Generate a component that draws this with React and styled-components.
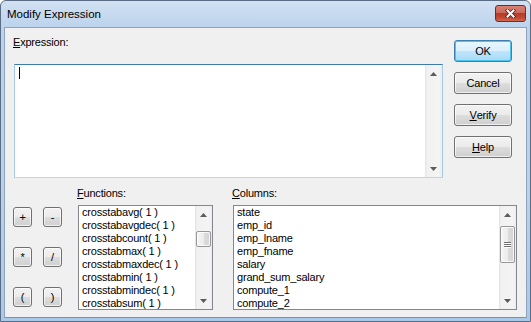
import React from 'react';
import styled, { createGlobalStyle } from 'styled-components';

const Global = createGlobalStyle`
    html, body {
        margin: 0;
        padding: 0;
        background: #fff;
    }
    body {
        width: 531px;
        height: 322px;
        overflow: hidden;
    }
`;

const functions = [
    'crosstabavg( 1 )',
    'crosstabavgdec( 1 )',
    'crosstabcount( 1 )',
    'crosstabmax( 1 )',
    'crosstabmaxdec( 1 )',
    'crosstabmin( 1 )',
    'crosstabmindec( 1 )',
    'crosstabsum( 1 )',
];

const columns = [
    'state',
    'emp_id',
    'emp_lname',
    'emp_fname',
    'salary',
    'grand_sum_salary',
    'compute_1',
    'compute_2',
];

const operators = ['+', '-', '*', '/', '(', ')'];

const Arrow = ({ down }) => (
    <svg width="7" height="4" viewBox="0 0 7 4">
        {down
            ? <polygon points="0,0 7,0 3.5,4" fill="#5b5b5b" />
            : <polygon points="3.5,0 7,4 0,4" fill="#5b5b5b" />}
    </svg>
);

const Scrollbar = ({ thumbTop, thumbHeight, grip }) => (
    <ScrollTrack>
        <ScrollArrow><Arrow /></ScrollArrow>
        <ScrollBody>
            {thumbHeight ? (
                <Thumb style={{ marginTop: thumbTop, height: thumbHeight }}>
                    {grip && <Grip><i /><i /><i /></Grip>}
                </Thumb>
            ) : null}
        </ScrollBody>
        <ScrollArrow><Arrow down /></ScrollArrow>
    </ScrollTrack>
);

const Key = ({ children }) => <u>{children}</u>;

export default function App() {
    return (
        <>
            <Global />
            <Window>
                <TitleBar>
                    <Title>Modify Expression</Title>
                    <CloseButton>
                        <svg width="13" height="9" viewBox="0 0 13 9">
                            <path d="M3.5 1.5 L9.5 7.5 M9.5 1.5 L3.5 7.5" stroke="#4a2622" strokeWidth="3.6" strokeLinecap="square" />
                            <path d="M3.5 1.5 L9.5 7.5 M9.5 1.5 L3.5 7.5" stroke="#fff" strokeWidth="2" strokeLinecap="square" />
                        </svg>
                    </CloseButton>
                </TitleBar>
                <Client>
                    <TopRow>
                        <ExprCol>
                            <Label><Key>E</Key>xpression:</Label>
                            <TextBox>
                                <TextArea><Caret /></TextArea>
                                <Scrollbar />
                            </TextBox>
                        </ExprCol>
                        <ButtonCol>
                            <Button $default>OK</Button>
                            <Button>Cancel</Button>
                            <Button><Key>V</Key>erify</Button>
                            <Button><Key>H</Key>elp</Button>
                        </ButtonCol>
                    </TopRow>
                    <BottomRow>
                        <OpsGrid>
                            {operators.map(op => <OpButton key={op}>{op}</OpButton>)}
                        </OpsGrid>
                        <ListCol $width={135} $gap={16}>
                            <Label><Key>F</Key>unctions:</Label>
                            <ListBox>
                                <Items>
                                    {functions.map(f => <Item key={f}>{f}</Item>)}
                                </Items>
                                <Scrollbar thumbTop={8} thumbHeight={16} />
                            </ListBox>
                        </ListCol>
                        <ListCol $width={284} $gap={20}>
                            <Label><Key>C</Key>olumns:</Label>
                            <ListBox>
                                <Items>
                                    {columns.map(c => <Item key={c}>{c}</Item>)}
                                </Items>
                                <Scrollbar thumbTop={3} thumbHeight={37} grip />
                            </ListBox>
                        </ListCol>
                    </BottomRow>
                </Client>
            </Window>
        </>
    );
}

const Window = styled.div`
    box-sizing: border-box;
    width: 531px;
    height: 322px;
    display: flex;
    flex-direction: column;
    padding: 0 3px 3px 3px;
    border: 1px solid #5a6d84;
    border-radius: 6px 6px 0 0;
    background: linear-gradient(to bottom, #d2e1f2 0px, #bcd3ec 26px, #b9d1ea 60%, #a9c9ea 100%);
    font-family: "Liberation Sans", Arial, sans-serif;
    font-size: 11px;
    letter-spacing: -0.2px;
    color: #000;
`;

const TitleBar = styled.div`
    height: 26px;
    display: flex;
    justify-content: space-between;
    align-items: flex-start;
    padding-left: 3px;
`;

const Title = styled.div`
    font-size: 11.5px;
    letter-spacing: 0;
    line-height: 14px;
    margin-top: 6px;
    color: #000;
`;

const CloseButton = styled.div`
    box-sizing: border-box;
    width: 31px;
    height: 17px;
    margin-top: 4px;
    margin-right: 1px;
    display: flex;
    align-items: center;
    justify-content: center;
    border: 1px solid #6b2f28;
    border-radius: 3px;
    background: linear-gradient(to bottom, #d98173 0%, #cd6a5b 45%, #b63a28 50%, #c24a35 80%, #d16a52 100%);
`;

const Client = styled.div`
    flex: 1;
    box-sizing: border-box;
    background: #f0f0f0;
    border: 1px solid #8ca4be;
    border-bottom-color: #4e9fd3;
    padding: 8px 0 0 9px;
    display: flex;
    flex-direction: column;
`;

const TopRow = styled.div`
    display: flex;
`;

const ExprCol = styled.div`
    width: 429px;
    display: flex;
    flex-direction: column;
`;

const Label = styled.div`
    line-height: 13px;
    height: 13px;
    margin-left: -1px;
    white-space: nowrap;
`;

const TextBox = styled.div`
    box-sizing: border-box;
    margin-top: 15px;
    height: 114px;
    display: flex;
    background: #fff;
    border: 1px solid #a6c9e4;
    border-top-color: #3d7bad;
    border-bottom-color: #b7d9ed;
`;

const TextArea = styled.div`
    flex: 1;
    padding: 2px 4px;
`;

const Caret = styled.div`
    width: 1px;
    height: 12px;
    background: #000;
`;

const ButtonCol = styled.div`
    margin-left: 11px;
    padding-top: 4px;
    display: flex;
    flex-direction: column;
    gap: 10px;
`;

const Button = styled.div`
    box-sizing: border-box;
    width: 58px;
    height: 22px;
    display: flex;
    align-items: center;
    justify-content: center;
    border: 1px solid ${p => (p.$default ? '#3c7fb1' : '#707070')};
    border-radius: 3px;
    background: ${p => (p.$default
        ? 'linear-gradient(to bottom, #eaf6fd 0%, #d9f0fc 50%, #bee6fd 51%, #a7d9f5 100%)'
        : 'linear-gradient(to bottom, #f2f2f2 0%, #ebebeb 50%, #dddddd 51%, #cfcfcf 100%)')};
    box-shadow: inset 0 0 0 1px ${p => (p.$default ? '#48c5f3' : 'rgba(255, 255, 255, 0.7)')};
`;

const BottomRow = styled.div`
    display: flex;
    align-items: flex-start;
    margin-top: 9px;
`;

const OpsGrid = styled.div`
    display: grid;
    grid-template-columns: 19px 19px;
    grid-auto-rows: 20px;
    column-gap: 11px;
    row-gap: 20px;
    margin-top: 20px;
    margin-left: -1px;
`;

const OpButton = styled(Button)`
    width: 19px;
    height: 20px;
    font-size: 11px;
`;

const ListCol = styled.div`
    width: ${p => p.$width}px;
    margin-left: ${p => p.$gap}px;
    display: flex;
    flex-direction: column;
`;

const ListBox = styled.div`
    box-sizing: border-box;
    margin-top: 5px;
    height: 105px;
    display: flex;
    background: #fff;
    border: 1px solid #828790;
    overflow: hidden;
`;

const Items = styled.div`
    flex: 1;
    padding-left: 3px;
    overflow: hidden;
`;

const Item = styled.div`
    line-height: 13px;
    height: 13px;
    white-space: nowrap;
`;

const ScrollTrack = styled.div`
    width: 17px;
    display: flex;
    flex-direction: column;
    background: linear-gradient(to right, #e3e3e3 0px, #f1f1f1 2px, #f4f4f4 14px, #ececec 17px);
`;

const ScrollArrow = styled.div`
    height: 17px;
    display: flex;
    align-items: center;
    justify-content: center;
`;

const ScrollBody = styled.div`
    flex: 1;
    display: flex;
    flex-direction: column;
    align-items: center;
`;

const Thumb = styled.div`
    box-sizing: border-box;
    width: 15px;
    border: 1px solid #979797;
    border-radius: 2px;
    background: linear-gradient(to right, #f5f5f5 0%, #ececec 50%, #dcdcdc 51%, #d4d4d4 100%);
    box-shadow: inset 0 0 0 1px rgba(255, 255, 255, 0.8);
    display: flex;
    align-items: center;
    justify-content: center;
`;

const Grip = styled.div`
    display: flex;
    flex-direction: column;
    gap: 1px;
    i {
        display: block;
        width: 7px;
        height: 1px;
        background: #6f6f6f;
        box-shadow: 0 1px 0 #fff;
    }
`;
